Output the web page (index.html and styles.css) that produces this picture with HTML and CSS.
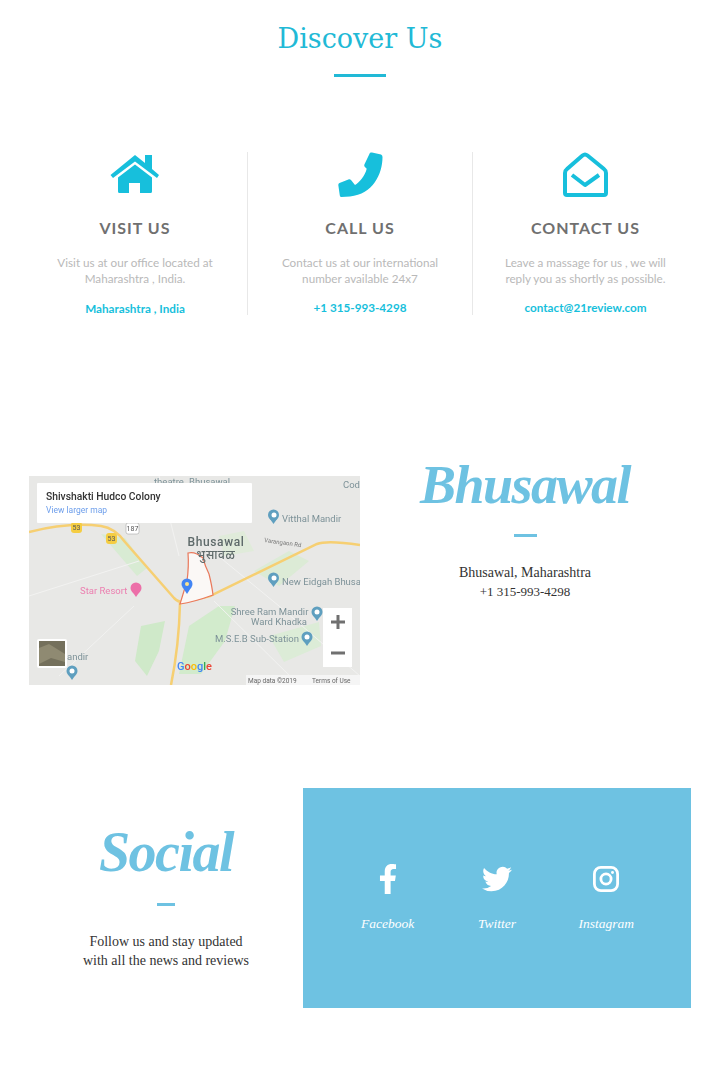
FILE: index.html
```html
<!DOCTYPE html>
<html lang="en">
<head>
  <meta charset="UTF-8" />
  <meta name="viewport" content="width=device-width, initial-scale=1.0"/>
  <title>Discover Us</title>
  <link rel="stylesheet" href="styles.css">
</head>
<body>
  <section class="discover">
    <h1>Discover Us</h1>
    <div class="rule"></div>

    <div class="cols">
      <div class="col">
        <svg class="icon" viewBox="0 0 50 45" width="50" height="45">
          <path d="M25 3 L35 11 V3 H42 V17 L49 23 L47 26 L25 9.500 L3 26 L0.500 23 Z"/>
          <path fill-rule="evenodd" d="M25 12.500 L42 25.500 V39.500 Q42 41 40.500 41 H9.500 Q8 41 8 39.500 V25.500 Z M19 31 V41 H30 V31 Z"/>
        </svg>
        <h3>VISIT US</h3>
        <p>Visit us at our office located at<br>Maharashtra , India.</p>
        <a class="link link-low" href="#">Maharashtra , India</a>
      </div>
      <div class="col">
        <svg class="icon" viewBox="0 0 45 45" width="45" height="45">
          <path d="M32 0.700 Q33 0.200 34 0.500 L43 2.500 Q44.500 3 44.500 5 C44.500 22 35 42 12 44.500 L3.500 45 Q2 45 1.800 43.500 L0.300 33 Q0.200 31.500 1.500 31 L11 27.300 Q12 27 13 28 L17 33 C21 31 27 24 28.700 16.800 L26.500 14.500 Q26 13.500 26.400 12.500 Z"/>
        </svg>
        <h3>CALL US</h3>
        <p>Contact us at our international<br>number available 24x7</p>
        <a class="link" href="#">+1 315-993-4298</a>
      </div>
      <div class="col">
        <svg class="icon icon-line" viewBox="0 0 45 45" width="45" height="45">
          <path d="M19.500 3.500 Q22 1.500 24.500 3.500 L41 17 Q43 18.500 43 21 V41 Q43 43 41 43 H4 Q2 43 2 41 V21 Q2 18.500 4 17 Z"/>
          <path d="M9 23 L22 33 L36 23"/>
        </svg>
        <h3>CONTACT US</h3>
        <p>Leave a massage for us , we will<br>reply you as shortly as possible.</p>
        <a class="link" href="#">contact@21review.com</a>
      </div>
    </div>
  </section>

  <section class="location">
    <svg class="map" viewBox="0 0 331 209" width="331" height="209">
      <rect width="331" height="209" fill="#e8e8e6"/>
      <!-- green patches -->
      <path d="M72 58 L96 62 L118 92 L108 100 Z" fill="#d8ebd3"/>
      <path d="M112 150 L136 145 L130 175 L118 200 L106 185 Z" fill="#cfe9c9"/>
      <path d="M160 150 L190 130 L206 130 L196 165 L172 198 L150 198 Z" fill="#d2ebcc"/>
      <path d="M225 95 L260 75 L280 85 L250 110 Z" fill="#dcebd6"/>
      <path d="M190 60 L215 55 L225 75 L195 80 Z" fill="#e0ebda"/>
      <path d="M240 160 L290 146 L292 170 L255 186 Z" fill="#dcecd7"/>
      <!-- minor roads -->
      <path d="M0 120 L110 85 M105 130 L30 200 M165 60 L250 130 L331 200 M185 125 L270 209 M130 0 L150 80" fill="none" stroke="#f2f2f1" stroke-width="1"/>
      <!-- main roads -->
      <path class="road" d="M0 56 Q40 46 72 50 Q86 52 96 66 L145 122 Q150 127 156 126 L181 120 L288 68 Q298 64 331 69"/>
      <path class="road" d="M151 127 Q150 170 142 209"/>
      <!-- area -->
      <path d="M159 77 Q166 75 174 82 Q176 90 180 98 Q183 110 184 119 Q165 126 151 128 Q154 118 158 105 Q160 90 159 77 Z" fill="#fbf8f6" stroke="#e9795c" stroke-width="1.200"/>
      <!-- road badges -->
      <rect x="42" y="46" width="11" height="11" rx="3" fill="#f5cd42"/>
      <rect x="77" y="57" width="11" height="11" rx="3" fill="#f5cd42"/>
      <rect x="97" y="47" width="13" height="11" rx="2" fill="#fff" stroke="#999" stroke-width="0.500"/>
      <text class="t-badge" x="47.500" y="54">53</text>
      <text class="t-badge" x="82.500" y="65">53</text>
      <text class="t-badge" x="103.500" y="55">187</text>
      <!-- place labels -->
      <text class="t-city" x="187" y="70">Bhusawal</text>
      <text class="t-city" x="187" y="83">भुसावळ</text>
      <text class="t-place" x="253" y="46">Vitthal Mandir</text>
      <text class="t-place" x="253" y="109">New Eidgah Bhusa</text>
      <text class="t-place" x="240.500" y="139" text-anchor="middle">Shree Ram Mandir</text>
      <text class="t-place" x="250" y="149" text-anchor="middle">Ward Khadka</text>
      <text class="t-place" x="186" y="166">M.S.E.B Sub-Station</text>
      <text class="t-place" x="38" y="184">andir</text>
      <text class="t-place" x="314" y="12">Cod</text>
      <text class="t-place" x="125" y="9">theatre</text>
      <text class="t-place" x="160" y="9">Bhusawal</text>
      <text class="t-star" x="51" y="118">Star Resort</text>
      <text class="t-small" x="235" y="66" transform="rotate(8 235 66)">Varangaon Rd</text>
      <!-- markers -->
      <g fill="#5f9fbf">
        <circle cx="244.500" cy="39" r="5.500"/><path d="M241 43 L244.500 48 L248 43 Z"/>
        <circle cx="244.500" cy="102" r="5.500"/><path d="M241 106 L244.500 111 L248 106 Z"/>
        <circle cx="288" cy="136" r="5.500"/><path d="M284.500 140 L288 145 L291.500 140 Z"/>
        <circle cx="278" cy="161" r="5.500"/><path d="M274.500 165 L278 170 L281.500 165 Z"/>
        <circle cx="43" cy="195" r="5.500"/><path d="M39.500 199 L43 204 L46.500 199 Z"/>
      </g>
      <g fill="#ec6fa8">
        <circle cx="107" cy="112" r="5.500"/><path d="M103.500 116 L107 121 L110.500 116 Z"/>
      </g>
      <g fill="#fff">
        <circle cx="245" cy="39" r="2.500"/><circle cx="245" cy="102" r="2.500"/><circle cx="288" cy="136" r="2.500"/><circle cx="278" cy="161" r="2.500"/><circle cx="43" cy="195" r="2.500"/>
      </g>
      <circle cx="158" cy="108" r="5.500" fill="#4285f4"/>
      <path d="M153.500 111 L158 118 L162.500 111 Z" fill="#4285f4"/>
      <circle cx="158" cy="108" r="2" fill="#fbe38e"/>
      <!-- popup -->
      <rect x="8" y="7" width="215" height="40" rx="1" fill="#fff"/>
      <text class="t-title" x="17" y="24">Shivshakti Hudco Colony</text>
      <text class="t-link" x="17" y="37">View larger map</text>
      <!-- zoom control -->
      <rect x="294" y="132" width="29" height="59" fill="#fff"/>
      <path d="M302 146 H316 M309 139 V153 M302 177 H316" stroke="#707070" stroke-width="3" fill="none"/>
      <!-- thumbnail -->
      <rect x="8" y="163" width="30" height="29" rx="2" fill="#fff"/>
      <rect x="10" y="165" width="26" height="25" fill="#74705c"/>
      <path d="M10 172 L20 168 L36 178 V186 L22 182 L10 188 Z" fill="#8f8a72"/>
      <!-- attribution -->
      <text class="t-google" x="148" y="194"><tspan fill="#4285f4">G</tspan><tspan fill="#ea4335">o</tspan><tspan fill="#fbbc05">o</tspan><tspan fill="#4285f4">g</tspan><tspan fill="#34a853">l</tspan><tspan fill="#ea4335">e</tspan></text>
      <rect x="217" y="199" width="114" height="10" fill="#f5f5f5"/>
      <text class="t-attr" x="219" y="207">Map data ©2019</text>
      <text class="t-attr" x="283" y="207">Terms of Use</text>
    </svg>

    <div class="location-info">
      <h2>Bhusawal</h2>
      <div class="rule-sm"></div>
      <p>Bhusawal, Maharashtra<br><span class="phone">+1 315-993-4298</span></p>
    </div>
  </section>

  <section class="social">
    <div class="social-info">
      <h2>Social</h2>
      <div class="rule-xs"></div>
      <p>Follow us and stay updated<br>with all the news and reviews</p>
    </div>
    <div class="social-box">
      <a class="social-item" href="#">
        <svg viewBox="0 0 320 512" width="20" height="30"><path d="M279.140 288l14.220-92.660h-88.910v-60.130c0-25.350 12.420-50.060 52.240-50.060h40.420V6.260S260.430 0 225.360 0c-73.220 0-121.080 44.380-121.080 124.720v70.620H22.890V288h81.390v224h100.170V288z"/></svg>
        <span>Facebook</span>
      </a>
      <a class="social-item" href="#">
        <svg viewBox="0 0 24 24" width="32" height="30"><path d="M23.953 4.570a10 10 0 01-2.825.775 4.958 4.958 0 002.163-2.723c-.951.555-2.005.959-3.127 1.184a4.920 4.920 0 00-8.384 4.482C7.690 8.095 4.067 6.130 1.640 3.162a4.822 4.822 0 00-.666 2.475c0 1.710.870 3.213 2.188 4.096a4.904 4.904 0 01-2.228-.616v.060a4.923 4.923 0 003.946 4.827 4.996 4.996 0 01-2.212.085 4.936 4.936 0 004.604 3.417 9.867 9.867 0 01-6.102 2.105c-.390 0-.779-.023-1.170-.067a13.995 13.995 0 007.557 2.209c9.053 0 13.998-7.496 13.998-13.985 0-.210 0-.420-.015-.630A9.935 9.935 0 0024 4.590z"/></svg>
        <span>Twitter</span>
      </a>
      <a class="social-item" href="#">
        <svg viewBox="0 0 28 28" width="26" height="30">
          <rect class="ig" x="1.500" y="1.500" width="25" height="25" rx="7"/>
          <circle class="ig" cx="14" cy="14" r="5.500"/>
          <circle cx="21" cy="7" r="1.600"/>
        </svg>
        <span>Instagram</span>
      </a>
    </div>
  </section>
</body>
</html>
```

FILE: styles.css
```css
* {
  box-sizing: border-box;
}
body {
  font-family: "Lato", Arial, sans-serif;
  background: #fff;
  margin: 0;
  height: 1069px;
  overflow: hidden;
}
a {
  text-decoration: none;
}
h1, h2, h3, p {
  margin: 0;
}

/* discover */
.discover {
  padding: 19px 23px 0;
}
h1 {
  font-family: "DejaVu Serif", serif;
  font-weight: 400;
  font-size: 27px;
  line-height: 40px;
  text-align: center;
  color: #21b9d6;
}
.rule {
  width: 52px;
  height: 3px;
  margin: 15px auto 0;
  background: #21b9d6;
}
.cols {
  display: grid;
  grid-template-columns: repeat(3, 225px);
  margin-top: 75px;
}
.col {
  height: 163px;
  text-align: center;
  border-right: 1px solid #e8e8e8;
}
.col:last-child {
  border-right: none;
}
.icon {
  display: block;
  margin: 0 auto;
  fill: #17bfdc;
}
.icon-line {
  fill: none;
  stroke: #17bfdc;
  stroke-width: 4;
  stroke-linejoin: round;
}
.col h3 {
  margin-top: 21px;
  font-size: 16px;
  line-height: 20px;
  font-weight: 700;
  letter-spacing: 1px;
  color: #707070;
}
.col p {
  margin-top: 16px;
  font-size: 11.700px;
  line-height: 16px;
  color: #b9b9b9;
}
.link {
  display: block;
  margin-top: 13px;
  font-size: 11.700px;
  line-height: 16px;
  font-weight: 700;
  color: #17bfdc;
}
.link-low {
  margin-top: 14px;
}

/* location */
.location {
  display: flex;
  align-items: flex-start;
  padding: 161px 0 0 29px;
}
.map {
  display: block;
  flex: none;
  filter: blur(0.5px);
  font-family: "Roboto", Arial, sans-serif;
}
.road {
  fill: none;
  stroke: #f6cf72;
  stroke-width: 2.500;
}
.t-badge {
  font-size: 7px;
  text-anchor: middle;
  fill: #555;
}
.t-city {
  font-size: 12px;
  font-weight: 500;
  letter-spacing: 0.6px;
  text-anchor: middle;
  fill: #5e6a6a;
  font-family: "Roboto", "Noto Sans", sans-serif;
}
.t-place {
  font-size: 9.500px;
  fill: #7d9298;
}
.t-star {
  font-size: 9.500px;
  fill: #ec7fb0;
}
.t-small {
  font-size: 6px;
  fill: #777;
}
.t-title {
  font-size: 10.300px;
  font-weight: 500;
  fill: #333;
}
.t-link {
  font-size: 8.500px;
  fill: #6d9eeb;
}
.t-google {
  font-size: 11px;
  font-weight: 500;
}
.t-attr {
  font-size: 6.500px;
  fill: #666;
}
.location-info {
  flex: 1;
  padding: 0 30px 0 0;
  margin-top: -21px;
  text-align: center;
  font-family: "Liberation Serif", serif;
}
h2 {
  font-family: "Liberation Serif", serif;
  font-weight: 700;
  font-style: italic;
  color: #6ec2e2;
}
.location-info h2 {
  font-size: 54px;
  line-height: 60px;
  letter-spacing: -1.500px;
}
.rule-sm {
  width: 23px;
  height: 3px;
  margin: 19px auto 0;
  background: #6ec2e2;
}
.location-info p {
  margin-top: 26px;
  font-size: 14px;
  line-height: 19px;
  color: #333;
}
.phone {
  font-size: 13px;
}

/* social */
.social {
  display: flex;
  padding: 103px 0 0 22px;
}
.social-info {
  width: 281px;
  padding-top: 34px;
  padding-left: 7px;
  text-align: center;
  font-family: "Liberation Serif", serif;
}
.social-info h2 {
  font-size: 56px;
  line-height: 60px;
  letter-spacing: -1.500px;
}
.rule-xs {
  width: 18px;
  height: 3px;
  margin: 21px auto 0;
  background: #6ec2e2;
}
.social-info p {
  margin-top: 26px;
  font-size: 14px;
  line-height: 19px;
  color: #333;
}
.social-box {
  width: 388px;
  height: 220px;
  padding: 76px 30px 0 30px;
  display: grid;
  grid-template-columns: repeat(3, 1fr);
  justify-items: center;
  align-items: start;
  background: #6ec2e2;
}
.social-item {
  display: flex;
  flex-direction: column;
  align-items: center;
  gap: 22px;
  color: #fff;
  fill: #fff;
  font-family: "Liberation Serif", serif;
  font-style: italic;
  font-size: 13.500px;
  line-height: 16px;
}
.ig {
  fill: none;
  stroke: #fff;
  stroke-width: 3;
}
```
